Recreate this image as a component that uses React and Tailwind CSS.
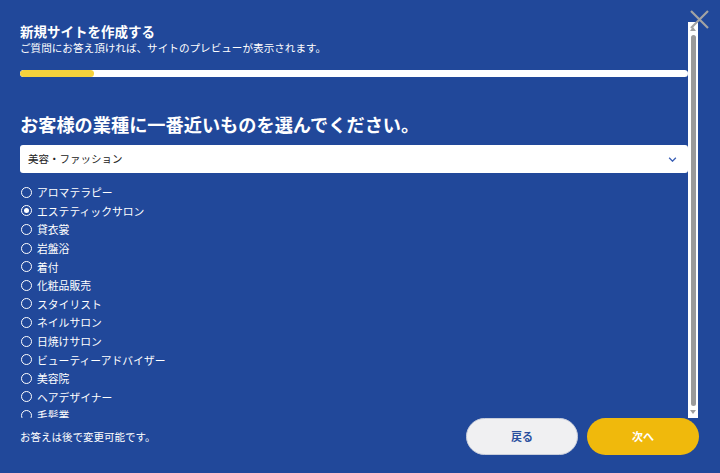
import { useState } from 'react'

const ITEMS = [
  'アロマテラピー',
  'エステティックサロン',
  '貸衣裳',
  '岩盤浴',
  '着付',
  '化粧品販売',
  'スタイリスト',
  'ネイルサロン',
  '日焼けサロン',
  'ビューティーアドバイザー',
  '美容院',
  'ヘアデザイナー',
  '毛髪業',
  'メイクアップ',
  'リラクゼーション',
]

const FONT = { fontFamily: '"Noto Sans CJK JP", "Noto Sans", sans-serif' }

function Radio({ checked }) {
  return (
    <span className="flex h-[11px] w-[11px] shrink-0 items-center justify-center rounded-full border-[1.6px] border-white">
      {checked && <span className="h-[5px] w-[5px] rounded-full bg-white" />}
    </span>
  )
}

export default function App() {
  const [selected, setSelected] = useState('エステティックサロン')

  return (
    <div className="relative h-[473px] w-[720px] overflow-hidden bg-[#21489a] text-white" style={FONT}>
      {/* close */}
      <button className="absolute right-[11px] top-[10px] z-10 h-[19px] w-[19px]">
        <svg viewBox="0 0 19 19" className="h-full w-full" stroke="#a3a3a3" strokeWidth="2.2">
          <path d="M1 1L18 18M18 1L1 18" />
        </svg>
      </button>

      <div className="flex pt-[22px] pl-5 pr-[22px]">
        {/* scroll body */}
        <div className="h-[396px] flex-1 overflow-hidden">
          <h1 className="text-[13.5px] font-bold leading-[18px]">新規サイトを作成する</h1>
          <p className="text-[10.6px] leading-[15px]">ご質問にお答え頂ければ、サイトのプレビューが表示されます。</p>

          <div className="mt-[15px] h-[7px] w-full overflow-hidden rounded-full bg-white">
            <div className="h-full w-[74px] rounded-full bg-[#f5d23c]" />
          </div>

          <h2 className="mt-[34px] text-[18.2px] font-bold leading-[26px]">お客様の業種に一番近いものを選んでください。</h2>

          <div className="mt-[8px] flex h-[28px] items-center justify-between rounded-[3px] bg-white pl-2 pr-[11px] text-[#222]">
            <span className="text-[10.5px]">美容・ファッション</span>
            <svg viewBox="0 0 10 6" className="h-[5px] w-[9px]" fill="none" stroke="#3a5fb5" strokeWidth="1.6">
              <path d="M1 1L5 5L9 1" />
            </svg>
          </div>

          <ul className="mt-[10px] flex flex-col">
            {ITEMS.map((item) => (
              <li
                key={item}
                onClick={() => setSelected(item)}
                className="flex h-[18.6px] cursor-pointer items-center gap-[5px] pl-[1px] text-[10.8px]"
              >
                <Radio checked={selected === item} />
                <span>{item}</span>
              </li>
            ))}
          </ul>
        </div>

        {/* scrollbar */}
        <div className="flex h-[396px] w-[10px] flex-col items-center bg-white">
          <div className="mt-[5px] h-0 w-0 border-x-[3px] border-b-[4px] border-x-transparent border-b-[#a0a0a0]" />
          <div className="mt-[4px] w-[5px] flex-1 rounded-full bg-[#9a9a9a]" />
          <div className="mb-[4px] mt-[4px] h-0 w-0 border-x-[3px] border-t-[4px] border-x-transparent border-t-[#a0a0a0]" />
        </div>
      </div>

      {/* footer */}
      <div className="flex items-center justify-between pl-5 pr-[21px]">
        <span className="text-[10.5px]">お答えは後で変更可能です。</span>
        <div className="flex gap-[9px]">
          <button className="h-[37px] w-[112px] rounded-full border border-[#c9cedb] bg-[#f0f0f2] text-[11px] font-bold text-[#2a4f9e]">
            戻る
          </button>
          <button className="h-[37px] w-[112px] rounded-full bg-[#f0b90c] text-[11px] font-bold text-white">
            次へ
          </button>
        </div>
      </div>
    </div>
  )
}
